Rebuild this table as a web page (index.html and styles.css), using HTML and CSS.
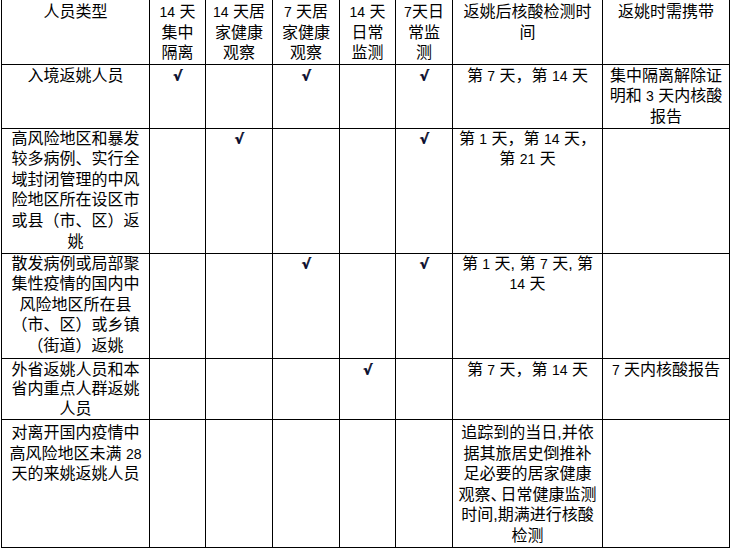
FILE: index.html
```html
<!DOCTYPE html>
<html lang="zh-CN">
<head>
<meta charset="utf-8">
<title>返姚人员管控要求</title>
<link rel="stylesheet" href="styles.css">
</head>
<body>
<table class="grid">
  <colgroup>
    <col class="c1"><col class="c2"><col class="c3"><col class="c4"><col class="c5"><col class="c6"><col class="c7"><col class="c8">
  </colgroup>
  <thead>
    <tr class="r0">
      <th>人员类型</th>
      <th><span class="n">14</span> 天<br>集中<br>隔离</th>
      <th><span class="n">14</span> 天居<br>家健康<br>观察</th>
      <th><span class="n">7</span> 天居<br>家健康<br>观察</th>
      <th><span class="n">14</span> 天<br>日常<br>监测</th>
      <th><span class="n">7</span>天日<br>常监<br>测</th>
      <th>返姚后核酸检测时<br>间</th>
      <th>返姚时需携带</th>
    </tr>
  </thead>
  <tbody>
    <tr class="r1">
      <td>入境返姚人员</td>
      <td><span class="ck">√</span></td>
      <td></td>
      <td><span class="ck">√</span></td>
      <td></td>
      <td><span class="ck">√</span></td>
      <td>第 <span class="n">7</span> 天，第 <span class="n">14</span> 天</td>
      <td>集中隔离解除证<br>明和 <span class="n">3</span> 天内核酸<br>报告</td>
    </tr>
    <tr class="r2">
      <td>高风险地区和暴发<br>较多病例、实行全<br>域封闭管理的中风<br>险地区所在设区市<br>或县（市、区）返<br>姚</td>
      <td></td>
      <td><span class="ck">√</span></td>
      <td></td>
      <td></td>
      <td><span class="ck">√</span></td>
      <td>第 <span class="n">1</span> 天，第 <span class="n">14</span> 天，<br>第 <span class="n">21</span> 天</td>
      <td></td>
    </tr>
    <tr class="r3">
      <td>散发病例或局部聚<br>集性疫情的国内中<br>风险地区所在县<br>（市、区）或乡镇<br>（街道）返姚</td>
      <td></td>
      <td></td>
      <td><span class="ck">√</span></td>
      <td></td>
      <td><span class="ck">√</span></td>
      <td>第 <span class="n">1</span> 天, 第 <span class="n">7</span> 天, 第<br><span class="n">14</span> 天</td>
      <td></td>
    </tr>
    <tr class="r4">
      <td>外省返姚人员和本<br>省内重点人群返姚<br>人员</td>
      <td></td>
      <td></td>
      <td></td>
      <td><span class="ck">√</span></td>
      <td></td>
      <td>第 <span class="n">7</span> 天，第 <span class="n">14</span> 天</td>
      <td><span class="n">7</span> 天内核酸报告</td>
    </tr>
    <tr class="r5">
      <td>对离开国内疫情中<br>高风险地区未满 <span class="n">28</span><br>天的来姚返姚人员</td>
      <td></td>
      <td></td>
      <td></td>
      <td></td>
      <td></td>
      <td>追踪到的当日,并依<br>据其旅居史倒推补<br>足必要的居家健康<br>观察<span class="tight">、</span>日常健康监测<br>时间,期满进行核酸<br>检测</td>
      <td></td>
    </tr>
  </tbody>
</table>
</body>
</html>
```

FILE: styles.css
```css
* {
  box-sizing: border-box;
}

body {
  margin: 0;
  background: #ffffff;
  color: #000000;
  font-family: "Liberation Sans", "Noto Sans CJK SC", sans-serif;
  font-size: 16px;
}

.grid {
  border-collapse: collapse;
  table-layout: fixed;
  width: 729px;
  margin-left: 1px;
}

.c1 { width: 148px; }
.c2 { width: 56px; }
.c3 { width: 67px; }
.c4 { width: 67px; }
.c5 { width: 56px; }
.c6 { width: 57px; }
.c7 { width: 150px; }
.c8 { width: 127px; }

.grid th,
.grid td {
  border: 1px solid #000000;
  padding: 0 3px;
  text-align: center;
  vertical-align: top;
  line-height: 20.6px;
  font-weight: normal;
  white-space: nowrap;
}

.grid thead th {
  border-top: none;
  padding-top: 2px;
}

.r0 { height: 64px; }
.r1 { height: 63px; }
.r2 { height: 125px; }
.r3 { height: 105px; }
.r4 { height: 61px; }
.r5 { height: 128px; }

.r1 td { padding-top: 1px; }
.r4 td {
  padding-top: 1px;
  line-height: 19.8px;
}
.r5 td { padding-top: 3px; }

.n {
  font-size: 14px;
}

.tight {
  letter-spacing: -6px;
}

.ck {
  font-family: "DejaVu Sans", sans-serif;
  font-weight: bold;
  font-size: 14px;
  color: #0c1030;
  text-shadow: 0.6px 0 0 #0c1030;
}
```
